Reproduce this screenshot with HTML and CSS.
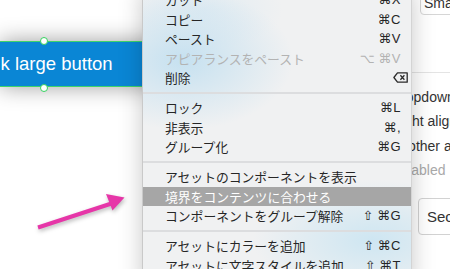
FILE: index.html
```html
<!DOCTYPE html>
<html lang="ja">
<head>
<meta charset="utf-8">
<link rel="stylesheet" href="styles.css">
</head>
<body>
<div class="stage">
  <div class="canvas">
    <div class="btn-band">
      <span class="btn-label">k large button</span>
      <span class="handle handle-top"></span>
      <span class="handle handle-bottom"></span>
    </div>
  </div>
  <div class="panel">
    <div class="field">Small</div>
    <div class="panel-rule"></div>
    <div class="panel-item">Dropdown</div>
    <div class="panel-item">Right align</div>
    <div class="panel-item">Another action</div>
    <div class="panel-item disabled">Disabled</div>
    <div class="sec-btn">Secondary</div>
  </div>

  <svg class="arrow" width="140" height="269" viewBox="0 0 140 269">
    <line x1="38" y1="227.5" x2="113" y2="203" stroke="#e636a8" stroke-width="4"/>
    <polygon points="106,194 124.5,197.5 112.5,210.5" fill="#e636a8"/>
  </svg>

  <div class="menu">
    <div class="row"><span>カット</span><span class="key">⌘X</span></div>
    <div class="row"><span>コピー</span><span class="key">⌘C</span></div>
    <div class="row"><span>ペースト</span><span class="key">⌘V</span></div>
    <div class="row off"><span>アピアランスをペースト</span><span class="key"><span class="mod">⌥</span>⌘V</span></div>
    <div class="row"><span>削除</span><span class="key del"><svg width="15" height="11" viewBox="0 0 15 11"><path d="M4.5 0.8 H14.2 V10.2 H4.5 L0.9 5.5 Z" fill="none" stroke="#2a2a2a" stroke-width="1.3" stroke-linejoin="round"/><path d="M7.4 3.3 L11.4 7.7 M11.4 3.3 L7.4 7.7" stroke="#2a2a2a" stroke-width="1.3"/></svg></span></div>
    <div class="sep"></div>
    <div class="row"><span>ロック</span><span class="key">⌘L</span></div>
    <div class="row"><span>非表示</span><span class="key">⌘,</span></div>
    <div class="row"><span>グループ化</span><span class="key">⌘G</span></div>
    <div class="sep"></div>
    <div class="row"><span>アセットのコンポーネントを表示</span></div>
    <div class="row hi"><span>境界をコンテンツに合わせる</span></div>
    <div class="row"><span>コンポーネントをグループ解除</span><span class="key"><span class="mod">⇧</span>⌘G</span></div>
    <div class="sep"></div>
    <div class="row"><span>アセットにカラーを追加</span><span class="key"><span class="mod">⇧</span>⌘C</span></div>
    <div class="row"><span>アセットに文字スタイルを追加</span><span class="key"><span class="mod">⇧</span>⌘T</span></div>
  </div>
</div>
</body>
</html>
```

FILE: styles.css
```css
html, body {
  margin: 0;
  padding: 0;
  background: #ffffff;
}

.stage {
  position: relative;
  width: 450px;
  height: 269px;
  overflow: hidden;
  display: flex;
  font-family: "Liberation Sans", Arial, sans-serif;
  background: #ffffff;
}

.canvas {
  flex: none;
  width: 380px;
  padding-top: 41px;
  box-sizing: border-box;
}

.btn-band {
  position: relative;
  width: 300px;
  height: 46px;
  box-sizing: border-box;
  background: #0a86d5;
  border-top: 1px solid #3fd46a;
  border-bottom: 1px solid #3fd46a;
  box-shadow: 0 0 22px rgba(0, 0, 0, 0.38);
  display: flex;
  align-items: center;
}

.btn-label {
  color: #ffffff;
  font-size: 18.5px;
  line-height: 22px;
  padding-left: 0.5px;
}

.handle {
  position: absolute;
  left: 40px;
  width: 6px;
  height: 6px;
  border-radius: 50%;
  background: #ffffff;
  border: 1.3px solid #35d25f;
}

.handle-top { top: -5.5px; }
.handle-bottom { bottom: -5.5px; }

.panel {
  flex: 1;
  padding-left: 11px;
  color: #333333;
  font-size: 14px;
  display: flex;
  flex-direction: column;
}

.field {
  margin-top: -12px;
  margin-left: 29px;
  height: 27px;
  box-sizing: border-box;
  border: 1px solid #d6d6d6;
  border-radius: 4px;
  padding: 6px 0 0 3px;
  font-size: 14px;
  line-height: 16px;
  white-space: nowrap;
}

.panel-rule {
  margin: 57px 0 0 -11px;
  height: 1px;
  background: #e4e4e4;
}

.panel-item {
  height: 24.5px;
  line-height: 24.5px;
  white-space: nowrap;
}

.panel-rule + .panel-item { margin-top: 11.75px; }

.panel-item.disabled { color: #a9a9a9; }

.sec-btn {
  margin-top: 15px;
  margin-left: 27px;
  height: 37px;
  box-sizing: border-box;
  border: 1px solid #d2d2d2;
  border-radius: 4px;
  padding-left: 8px;
  font-size: 15px;
  line-height: 35px;
  white-space: nowrap;
}

.arrow {
  position: absolute;
  left: 0;
  top: 0;
  filter: drop-shadow(1px 2px 2px rgba(0, 0, 0, 0.28));
}

.menu {
  position: absolute;
  left: 142px;
  top: -10px;
  width: 270px;
  height: 300px;
  box-sizing: border-box;
  border-left: 1px solid #c9c9c9;
  border-right: 1px solid #d4d4d4;
  background:
    radial-gradient(ellipse 110px 70px at 40px 70px, rgba(190, 222, 240, 0.85), rgba(190, 222, 240, 0) 100%),
    radial-gradient(ellipse 120px 60px at 230px 250px, rgba(200, 228, 242, 0.85), rgba(200, 228, 242, 0) 100%),
    radial-gradient(ellipse 80px 40px at 60px 20px, rgba(215, 232, 242, 0.6), rgba(215, 232, 242, 0) 100%),
    #f0f1f2;
  box-shadow: 0 0 22px rgba(0, 0, 0, 0.22);
  font-family: "Noto Sans CJK JP", sans-serif;
  font-size: 12.8px;
  color: #262626;
}

.row {
  height: 19.5px;
  display: flex;
  align-items: center;
  justify-content: space-between;
  padding: 0 10px 0 22px;
  white-space: nowrap;
}

.key {
  font-family: "Liberation Sans", "DejaVu Sans", sans-serif;
  font-size: 13px;
  letter-spacing: 0.5px;
}

.mod { margin-right: 3px; }

.key.del {
  display: flex;
  margin-right: -7px;
}

.row.off { color: #b3b3b3; }

.row.hi {
  background: #a6a6a6;
  color: #ffffff;
}

.sep {
  height: 2px;
  margin: 4.25px 0;
  background: #dcdddf;
}
```
